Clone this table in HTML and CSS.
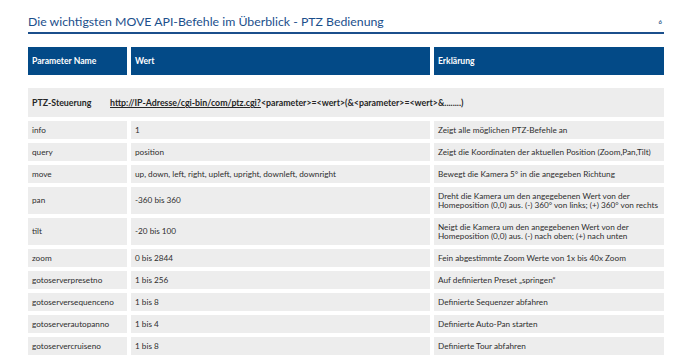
FILE: index.html
```html
<!DOCTYPE html>
<html lang="de">
<head>
<meta charset="utf-8">
<title>PTZ Bedienung</title>
<link rel="stylesheet" href="styles.css">
</head>
<body>
<div class="page">
  <header class="title-bar">
    <h1 class="title">Die wichtigsten MOVE API-Befehle im Überblick - PTZ Bedienung</h1>
    <span class="page-num">6</span>
  </header>

  <div class="table">
    <div class="row head">
      <div class="cell">Parameter Name</div>
      <div class="cell">Wert</div>
      <div class="cell">Erklärung</div>
    </div>

    <div class="row-full ptz">
      <span class="ptz-label">PTZ-Steuerung</span>
      <span class="ptz-url"><span class="link">http://IP-Adresse/cgi-bin/com/ptz.cgi?</span>&lt;parameter&gt;=&lt;wert&gt;(&amp;&lt;parameter&gt;=&lt;wert&gt;&amp;........)</span>
    </div>

    <div class="row">
      <div class="cell">info</div>
      <div class="cell">1</div>
      <div class="cell">Zeigt alle möglichen PTZ-Befehle an</div>
    </div>
    <div class="row">
      <div class="cell">query</div>
      <div class="cell">position</div>
      <div class="cell">Zeigt die Koordinaten der aktuellen Position (Zoom,Pan,Tilt)</div>
    </div>
    <div class="row">
      <div class="cell">move</div>
      <div class="cell">up, down, left, right, upleft, upright, downleft, downright</div>
      <div class="cell">Bewegt die Kamera 5° in die angegeben Richtung</div>
    </div>
    <div class="row tall">
      <div class="cell">pan</div>
      <div class="cell">-360 bis 360</div>
      <div class="cell">Dreht die Kamera um den angegebenen Wert von der<br>Homeposition (0,0) aus. (-) 360° von links; (+) 360° von rechts</div>
    </div>
    <div class="row tall">
      <div class="cell">tilt</div>
      <div class="cell">-20 bis 100</div>
      <div class="cell">Neigt die Kamera um den angegebenen Wert von der<br>Homeposition (0,0) aus. (-) nach oben; (+) nach unten</div>
    </div>
    <div class="row">
      <div class="cell">zoom</div>
      <div class="cell">0 bis 2844</div>
      <div class="cell">Fein abgestimmte Zoom Werte von 1x bis 40x Zoom</div>
    </div>
    <div class="row">
      <div class="cell">gotoserverpresetno</div>
      <div class="cell">1 bis 256</div>
      <div class="cell">Auf definierten Preset „springen“</div>
    </div>
    <div class="row">
      <div class="cell">gotoserversequenceno</div>
      <div class="cell">1 bis 8</div>
      <div class="cell">Definierte Sequenzer abfahren</div>
    </div>
    <div class="row">
      <div class="cell">gotoserverautopanno</div>
      <div class="cell">1 bis 4</div>
      <div class="cell">Definierte Auto-Pan starten</div>
    </div>
    <div class="row">
      <div class="cell">gotoservercruiseno</div>
      <div class="cell">1 bis 8</div>
      <div class="cell">Definierte Tour abfahren</div>
    </div>
  </div>
</div>
</body>
</html>
```

FILE: styles.css
```css
* { box-sizing: border-box; }

html, body {
  margin: 0;
  padding: 0;
  background: #ffffff;
}

body {
  font-family: Lato, "Open Sans", "Liberation Sans", sans-serif;
  color: #2e2e2e;
}

.page {
  width: 690px;
  padding: 15px 26px 0 28px;
}

.title-bar {
  display: flex;
  align-items: flex-end;
  justify-content: space-between;
  border-bottom: 2px solid #1b4f8c;
  padding-bottom: 3px;
  height: 19px;
}

.title {
  margin: 0;
  font-size: 12.3px;
  font-weight: 400;
  color: #1b4f8c;
  line-height: 15px;
  white-space: nowrap;
}

.page-num {
  font-size: 6px;
  font-weight: 700;
  color: #3b5f8e;
  line-height: 8px;
  padding-right: 2px;
  padding-bottom: 3px;
}

.table {
  margin-top: 13px;
  width: 636px;
  display: flex;
  flex-direction: column;
  gap: 4px;
}

.row {
  display: grid;
  grid-template-columns: 99px 299px 230px;
  column-gap: 4px;
  height: 18px;
}

.row.tall { height: 27px; }

.cell {
  background: #ededed;
  display: flex;
  align-items: center;
  padding: 0 4px;
  font-size: 8.2px;
  line-height: 9px;
  white-space: nowrap;
}

.row.head { height: 28px; }

.row.head .cell {
  background: #034a87;
  color: #ffffff;
  font-weight: 700;
  font-size: 8.6px;
}

.row-full {
  background: #ededed;
  display: flex;
  align-items: center;
  height: 29px;
  padding: 0 4px;
  font-size: 8.8px;
  font-weight: 700;
  white-space: nowrap;
  color: #262626;
}

.ptz { margin-top: 9px; }

.ptz-label { width: 78px; flex: none; }

.link { text-decoration: underline; }
```
